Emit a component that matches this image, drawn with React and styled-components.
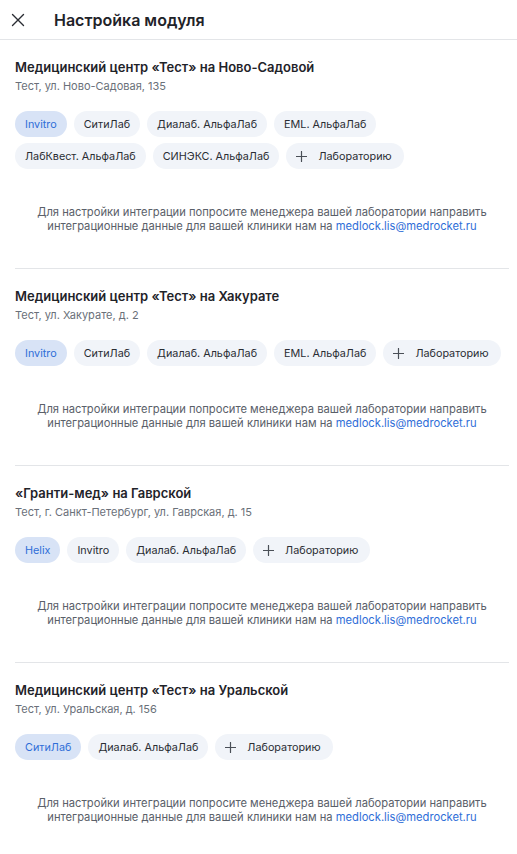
import React from 'react'
import styled, { createGlobalStyle } from 'styled-components'

const GlobalStyle = createGlobalStyle`
  body {
    margin: 0;
    background: #fff;
    font-family: Inter, "Noto Sans", sans-serif;
    color: #1f2329;
  }
`

const Page = styled.div`
  width: 517px;
`

const Header = styled.div`
  display: flex;
  align-items: center;
  height: 39px;
  border-bottom: 1px solid #e3e5e8;
  padding-left: 11px;
`

const CloseButton = styled.button`
  display: flex;
  align-items: center;
  justify-content: center;
  width: 14px;
  height: 14px;
  padding: 0;
  margin-right: 29px;
  border: none;
  background: none;
  color: #2a2d33;
`

const Title = styled.h1`
  margin: 0;
  font-size: 16px;
  font-weight: 600;
  color: #1f2329;
  line-height: 22px;
`

const Section = styled.section`
  margin: 0 8px 0 15px;
  padding: 18px 0 35px;
  border-bottom: ${p => (p.$last ? 'none' : '1px solid #e3e5e8')};
`

const ClinicName = styled.h2`
  margin: 0;
  font-size: 13px;
  font-weight: 600;
  line-height: 18px;
  color: #1f2329;
`

const Address = styled.div`
  margin-top: 2px;
  font-size: 11px;
  line-height: 16px;
  color: #6a7079;
`

const Chips = styled.div`
  display: flex;
  flex-wrap: wrap;
  gap: 6px 7px;
  margin-top: 17px;
`

const Chip = styled.button`
  display: flex;
  align-items: center;
  gap: 11px;
  height: 26px;
  padding: 0 ${p => (p.$add ? '12px' : '10px')} 0 10px;
  border: none;
  border-radius: 13px;
  font-family: inherit;
  font-size: 10.8px;
  background: ${p => (p.$active ? '#d8e3f6' : '#f1f4f9')};
  color: ${p => (p.$active ? '#2f6ed8' : '#2a2d33')};
`

const Note = styled.p`
  margin: 36px 0 0;
  text-align: center;
  font-size: 11.2px;
  line-height: 14px;
  color: #5a6069;
`

const Mail = styled.a`
  color: #2f6ed8;
  text-decoration: none;
`

const sections = [
  {
    name: 'Медицинский центр «Тест» на Ново-Садовой',
    address: 'Тест, ул. Ново-Садовая, 135',
    labs: ['Invitro', 'СитиЛаб', 'Диалаб. АльфаЛаб', 'EML. АльфаЛаб', 'ЛабКвест. АльфаЛаб', 'СИНЭКС. АльфаЛаб'],
  },
  {
    name: 'Медицинский центр «Тест» на Хакурате',
    address: 'Тест, ул. Хакурате, д. 2',
    labs: ['Invitro', 'СитиЛаб', 'Диалаб. АльфаЛаб', 'EML. АльфаЛаб'],
  },
  {
    name: '«Гранти-мед» на Гаврской',
    address: 'Тест, г. Санкт-Петербург, ул. Гаврская, д. 15',
    labs: ['Helix', 'Invitro', 'Диалаб. АльфаЛаб'],
  },
  {
    name: 'Медицинский центр «Тест» на Уральской',
    address: 'Тест, ул. Уральская, д. 156',
    labs: ['СитиЛаб', 'Диалаб. АльфаЛаб'],
  },
]

const CloseIcon = () => (
  <svg width="14" height="14" viewBox="0 0 14 14" fill="none">
    <path d="M1.5 1.5l11 11M12.5 1.5l-11 11" stroke="currentColor" strokeWidth="1.4" strokeLinecap="round" />
  </svg>
)

const PlusIcon = () => (
  <svg width="11" height="11" viewBox="0 0 11 11" fill="none">
    <path d="M5.5 0.5v10M0.5 5.5h10" stroke="#4a4f57" strokeWidth="1.2" strokeLinecap="round" />
  </svg>
)

export default function App() {
  return (
    <Page>
      <GlobalStyle />
      <Header>
        <CloseButton>
          <CloseIcon />
        </CloseButton>
        <Title>Настройка модуля</Title>
      </Header>
      {sections.map((s, i) => (
        <Section key={s.name} $last={i === sections.length - 1}>
          <ClinicName>{s.name}</ClinicName>
          <Address>{s.address}</Address>
          <Chips>
            {s.labs.map((lab, j) => (
              <Chip key={lab} $active={j === 0}>{lab}</Chip>
            ))}
            <Chip $add>
              <PlusIcon />
              Лабораторию
            </Chip>
          </Chips>
          <Note>
            Для настройки интеграции попросите менеджера вашей лаборатории направить
            интеграционные данные для вашей клиники нам на{' '}
            <Mail href="#">medlock.lis@medrocket.ru</Mail>
          </Note>
        </Section>
      ))}
    </Page>
  )
}
